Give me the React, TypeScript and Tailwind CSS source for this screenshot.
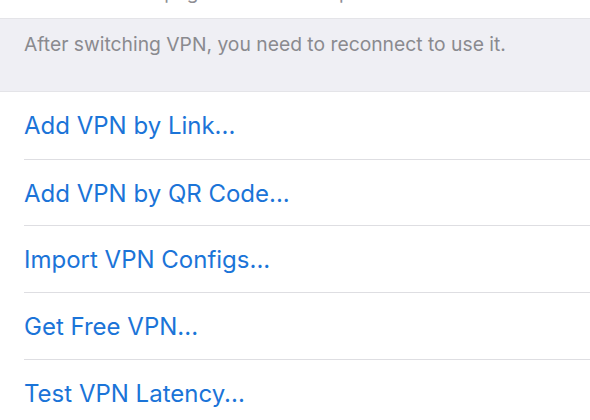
const actions = [
  "Add VPN by Link...",
  "Add VPN by QR Code...",
  "Import VPN Configs...",
  "Get Free VPN...",
  "Test VPN Latency...",
];

export default function App() {
  return (
    <div className="h-[420px] w-[590px] overflow-hidden bg-white font-['Inter','Liberation_Sans',sans-serif]">
      {/* cut-off cell above */}
      <div className="h-[18px] overflow-hidden bg-white">
        <p className="-mt-[19px] pl-[83px] text-[19px] leading-[24px] text-[#8e8e93]">
          Visit this page to check for updates.
        </p>
      </div>

      <div className="h-[74px] border-t border-b border-[#e4e4e8] bg-[#efeff4] px-6 pt-[12px]">
        <p className="text-[19.3px] leading-[26px] text-[#8a8a8f]">
          After switching VPN, you need to reconnect to use it.
        </p>
      </div>

      <ul className="pl-6">
        {actions.map((label, i) => (
          <li
            key={label}
            className={
              "flex h-[66.7px] items-center pt-[2px] text-[24px] text-[#1b74d8] " +
              (i > 0 ? "border-t border-[#dedee2]" : "")
            }
          >
            {label}
          </li>
        ))}
      </ul>
    </div>
  );
}
